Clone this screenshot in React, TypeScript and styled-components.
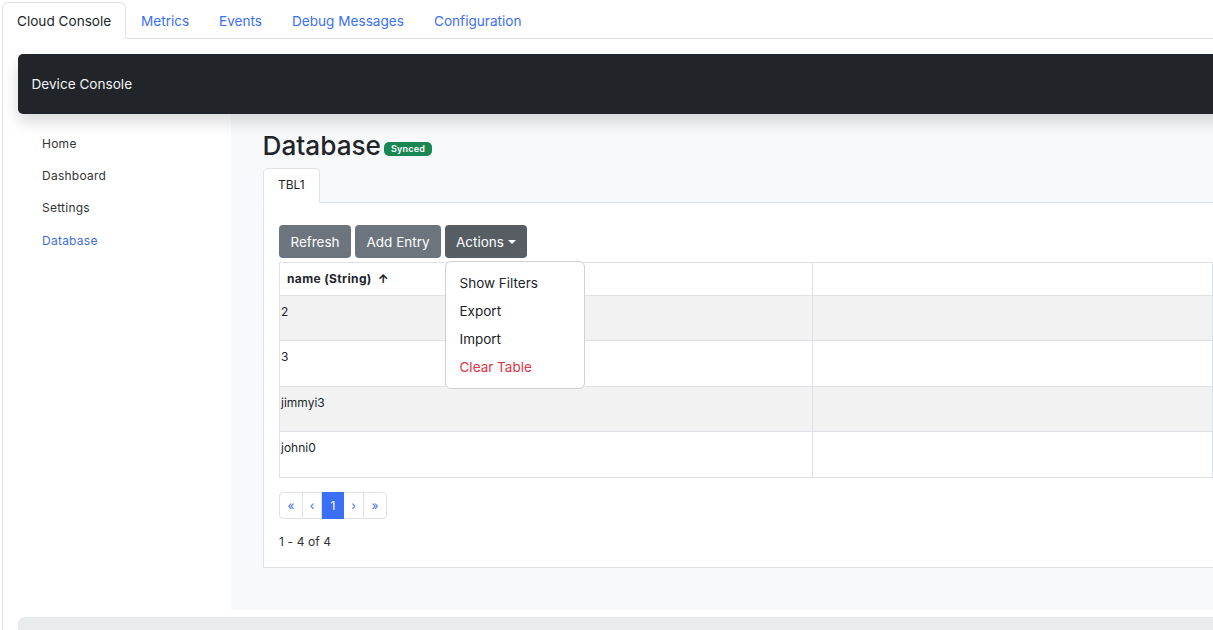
import React from "react";
import styled, { createGlobalStyle } from "styled-components";

const GlobalStyle = createGlobalStyle`
  html, body {
    margin: 0;
    height: 630px;
    overflow: hidden;
    background: #fff;
  }
  * {
    box-sizing: border-box;
  }
  body {
    font-family: Inter, "Liberation Sans", sans-serif;
    color: #212529;
  }
`;

const Page = styled.div`
  width: 1600px;
  height: 630px;
  padding: 2px 0 0 2px;
  overflow: hidden;
`;

const TopTabs = styled.nav`
  display: flex;
  height: 37px;
  border-bottom: 1px solid #dee2e6;
`;

const TopTab = styled.a<{ $active?: boolean; $width: number }>`
  display: flex;
  align-items: center;
  flex: 0 0 ${({ $width }) => $width}px;
  height: 37px;
  padding: 0 0 0 14px;
  font-size: 13.6px;
  color: ${({ $active }) => ($active ? "#212529" : "#3b6ff5")};
  background: ${({ $active }) => ($active ? "#fff" : "transparent")};
  border: 1px solid ${({ $active }) => ($active ? "#dee2e6" : "transparent")};
  border-bottom-color: ${({ $active }) => ($active ? "#fff" : "transparent")};
  border-radius: 6px 6px 0 0;
`;

const TabBody = styled.div`
  padding: 15px 0 0 15px;
  border-left: 1px solid #dee2e6;
  height: 591px;
`;

const NavBar = styled.header`
  position: relative;
  z-index: 2;
  display: flex;
  align-items: center;
  height: 60px;
  padding: 0 0 1px 13.5px;
  background: #212529;
  color: #f1f3f5;
  font-size: 13.6px;
  border-radius: 5px 0 0 5px;
  box-shadow: 0 8px 16px rgba(0, 0, 0, 0.15);
`;

const Layout = styled.div`
  display: flex;
  height: 496px;
`;

const Sidebar = styled.aside`
  flex: 0 0 213px;
  padding-top: 13px;
  display: flex;
  flex-direction: column;
`;

const SideLink = styled.a<{ $active?: boolean }>`
  display: flex;
  align-items: center;
  height: 32.3px;
  padding-left: 24px;
  font-size: 12px;
  font-weight: 400;
  letter-spacing: 0.25px;
  color: ${({ $active }) => ($active ? "#3f6fd8" : "#333")};
`;

const Main = styled.main`
  flex: 1;
  background: #f8f9fa;
  padding: 16px 0 0 32px;
`;

const TitleRow = styled.div`
  display: flex;
  align-items: center;
  height: 30px;
  margin-bottom: 8px;
`;

const Title = styled.h1`
  margin: 1px 0 0 -0.5px;
  font-size: 26.2px;
  font-weight: 500;
  line-height: 30px;
`;

const Badge = styled.span`
  margin: 8px 0 0 3px;
  display: inline-flex;
  align-items: center;
  justify-content: center;
  width: 48px;
  height: 14px;
  padding-bottom: 1px;
  border-radius: 5px;
  background: #198754;
  color: #fff;
  font-size: 9px;
  font-weight: 600;
  letter-spacing: 0.2px;
`;

const PanelTabs = styled.div`
  display: flex;
  height: 35px;
  border-bottom: 1px solid #dee2e6;
`;

const PanelTab = styled.div`
  display: flex;
  align-items: center;
  width: 57px;
  height: 35px;
  padding: 0 0 2px 14px;
  font-size: 12px;
  font-weight: 400;
  background: #fff;
  border: 1px solid #dee2e6;
  border-bottom-color: #fff;
  border-radius: 5px 5px 0 0;
`;

const Panel = styled.section`
  height: 365px;
  padding: 22px 0 0 15px;
  background: #fff;
  border: 1px solid #dee2e6;
  border-top: 0;
`;

const Toolbar = styled.div`
  position: relative;
  display: flex;
  gap: 4px;
  height: 33px;
  margin-bottom: 4px;
`;

const ActionButton = styled.button<{ $open?: boolean; $width: number }>`
  display: flex;
  align-items: center;
  justify-content: center;
  width: ${({ $width }) => $width}px;
  height: 33px;
  padding: 0;
  border: 0;
  border-radius: 4px;
  font-family: inherit;
  font-size: 13.5px;
  color: #fff;
  background: ${({ $open }) => ($open ? "#565e64" : "#6c757d")};
`;

const Caret = styled.span`
  margin-left: 4px;
  width: 0;
  height: 0;
  border-top: 4px solid #fff;
  border-left: 4px solid transparent;
  border-right: 4px solid transparent;
`;

const Menu = styled.ul`
  position: absolute;
  z-index: 3;
  top: 36px;
  left: 166px;
  width: 140px;
  height: 128px;
  margin: 0;
  padding: 7px 0;
  list-style: none;
  background: #fff;
  border: 1px solid #ced1d4;
  border-radius: 6px;
`;

const MenuItem = styled.li<{ $danger?: boolean }>`
  display: flex;
  align-items: center;
  height: 28px;
  padding: 0 0 1px 13.5px;
  font-size: 13.5px;
  color: ${({ $danger }) => ($danger ? "#dc3545" : "#212529")};
`;

const Table = styled.div`
  width: 934px;
  border: 1px solid #dee2e6;
`;

const Row = styled.div<{ $height: number; $striped?: boolean }>`
  display: grid;
  grid-template-columns: 532px 1fr;
  height: ${({ $height }) => $height}px;
  background: ${({ $striped }) => ($striped ? "#f2f2f2" : "#fff")};
  border-bottom: 1px solid #dee2e6;
  &:last-child {
    border-bottom: 0;
  }
`;

const Cell = styled.div`
  padding: 7px 0 0 1px;
  font-size: 12px;
  line-height: 17px;
  color: #212529;
  & + & {
    border-left: 1px solid #dee2e6;
  }
`;

const HeadCell = styled(Cell)`
  display: flex;
  align-items: center;
  gap: 6px;
  padding: 0 0 2px 7px;
  font-weight: 700;
  letter-spacing: 0.37px;
`;

const Pager = styled.div`
  display: flex;
  width: 108px;
  height: 27px;
  margin-top: 14px;
  border: 1px solid #dee2e6;
  border-radius: 4px;
`;

const PageCell = styled.span<{ $active?: boolean; $width: number }>`
  display: flex;
  align-items: center;
  justify-content: center;
  flex: 0 0 ${({ $width }) => $width}px;
  margin: ${({ $active }) => ($active ? "-1px 0" : "0")};
  font-size: 12px;
  color: ${({ $active }) => ($active ? "#fff" : "#3b6ff5")};
  background: ${({ $active }) => ($active ? "#3b6ff5" : "transparent")};
  border-right: ${({ $active }) => ($active ? "0" : "1px solid #dee2e6")};
  &:last-child {
    border-right: 0;
  }
`;

const Count = styled.div`
  margin-top: 15px;
  font-size: 12px;
  line-height: 15px;
  letter-spacing: 0.12px;
  color: #333;
`;

const Footer = styled.footer`
  height: 40px;
  margin-top: 7px;
  background: #e9ecef;
  border-radius: 6px 0 0 0;
`;

const tabs = [
  { label: "Metrics", width: 78 },
  { label: "Events", width: 73 },
  { label: "Debug Messages", width: 142 },
  { label: "Configuration", width: 118 },
];
const rows = [
  { name: "2", striped: true },
  { name: "3", striped: false },
  { name: "jimmyi3", striped: true },
  { name: "johni0", striped: false },
];

export default function App() {
  return (
    <>
      <GlobalStyle />
      <Page>
        <TopTabs>
          <TopTab $active $width={124}>Cloud Console</TopTab>
          {tabs.map((t) => (
            <TopTab key={t.label} $width={t.width}>{t.label}</TopTab>
          ))}
        </TopTabs>
        <TabBody>
          <NavBar>Device Console</NavBar>
          <Layout>
            <Sidebar>
              <SideLink>Home</SideLink>
              <SideLink>Dashboard</SideLink>
              <SideLink>Settings</SideLink>
              <SideLink $active>Database</SideLink>
            </Sidebar>
            <Main>
              <TitleRow>
                <Title>Database</Title>
                <Badge>Synced</Badge>
              </TitleRow>
              <PanelTabs>
                <PanelTab>TBL1</PanelTab>
              </PanelTabs>
              <Panel>
                <Toolbar>
                  <ActionButton $width={72}>Refresh</ActionButton>
                  <ActionButton $width={86}>Add Entry</ActionButton>
                  <ActionButton $width={82} $open>
                    Actions
                    <Caret />
                  </ActionButton>
                  <Menu>
                    <MenuItem>Show Filters</MenuItem>
                    <MenuItem>Export</MenuItem>
                    <MenuItem>Import</MenuItem>
                    <MenuItem $danger>Clear Table</MenuItem>
                  </Menu>
                </Toolbar>
                <Table>
                  <Row $height={33}>
                    <HeadCell>
                      name (String)
                      <span>↑</span>
                    </HeadCell>
                    <Cell />
                  </Row>
                  {rows.map((r) => (
                    <Row key={r.name} $height={45.3} $striped={r.striped}>
                      <Cell>{r.name}</Cell>
                      <Cell />
                    </Row>
                  ))}
                </Table>
                <Pager>
                  <PageCell $width={23}>«</PageCell>
                  <PageCell $width={19}>‹</PageCell>
                  <PageCell $width={22} $active>1</PageCell>
                  <PageCell $width={20}>›</PageCell>
                  <PageCell $width={22}>»</PageCell>
                </Pager>
                <Count>1 - 4 of 4</Count>
              </Panel>
            </Main>
          </Layout>
          <Footer />
        </TabBody>
      </Page>
    </>
  );
}
